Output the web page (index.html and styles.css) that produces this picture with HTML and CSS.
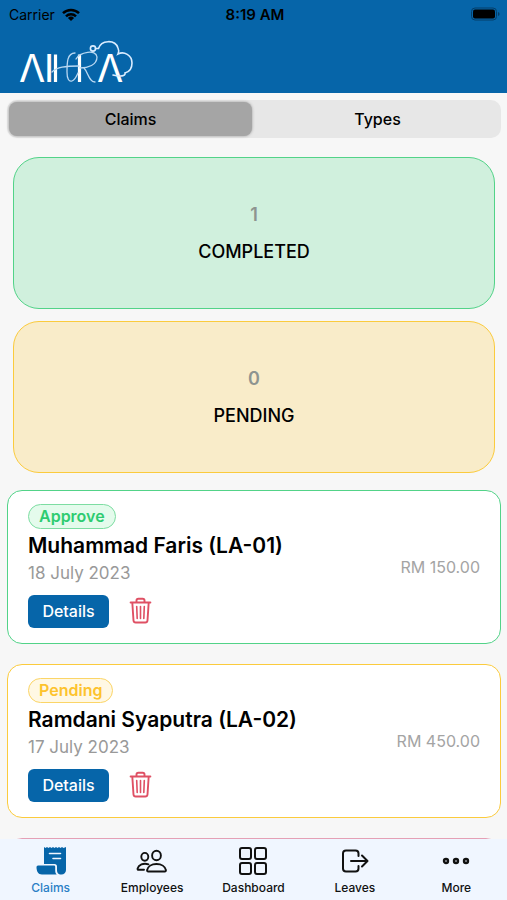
FILE: index.html
```html
<!DOCTYPE html>
<html lang="en">
<head>
<meta charset="utf-8">
<meta name="viewport" content="width=device-width, initial-scale=1">
<title>AIHRA Claims</title>
<link rel="stylesheet" href="styles.css">
</head>
<body>
<svg width="0" height="0" class="defs" aria-hidden="true">
  <symbol id="trash" viewBox="0 0 24 28">
    <g fill="none" stroke="currentColor" stroke-linecap="round" stroke-linejoin="round">
      <path stroke-width="1.9" d="M1.600 5.500h19.800M3.300 5.500l1.200 18a2.200 2.200 0 0 0 2.200 2h9.600a2.200 2.200 0 0 0 2.200-2L19.700 5.500M7.500 5V3.500a1.800 1.800 0 0 1 1.800-1.800h4.400a1.800 1.800 0 0 1 1.800 1.800V5"/>
      <path stroke-width="1.6" d="M7.700 9.500l.5 12M11.500 9.500v12M15.300 9.500l-.5 12"/>
    </g>
  </symbol>
</svg>

<header class="header">
  <div class="status">
    <span class="carrier">Carrier
      <svg width="18" height="13" viewBox="0 0 18 13" aria-hidden="true"><g fill="none" stroke="#000" stroke-width="2.5"><path d="M1 5.2a11.4 11.4 0 0 1 16 0"/><path d="M4 8.3a7.2 7.2 0 0 1 10 0"/></g><path d="M9 13L5.9 9.9a4.4 4.4 0 0 1 6.2 0z"/></svg>
    </span>
    <span class="time">8:19 AM</span>
    <span class="battery">
      <svg width="30" height="14" viewBox="0 0 30 14" aria-hidden="true"><rect x=".5" y="1" width="25" height="12" rx="3.5" fill="none" stroke="#043e69"/><rect x="2" y="2.500" width="22" height="9" rx="2"/><path d="M27 5v4q1.600-.6 1.600-2T27 5z" fill="#043e69"/></svg>
    </span>
  </div>
  <svg class="logo" width="120" height="54" viewBox="0 0 120 54" role="img" aria-label="AIHRA">
    <g class="logo-letters">
      <text x="1" y="43">Λ</text>
      <text x="26" y="43">I</text>
      <text x="79" y="43">Λ</text>
    </g>
    <path d="M37.500 15.500V43M61.500 15.500V43" fill="none" stroke="#fff" stroke-width="3.200"/>
    <g fill="none" stroke="#b9d8f2" stroke-width="1.300" stroke-linecap="round">
      <path d="M34 33C39 28 47 27 61 27"/>
      <path d="M57 14C49 14 49 24 49 33C49 40 51 43 54 42C57 41 58 38 60 34"/>
      <path d="M58 20C62 13 78 10 79 18C79 26 70 29 62 29M66 29C70 33 71 43 77 43"/>
    </g>
    <g fill="none" stroke="#d9ecff" stroke-width="1.600" stroke-linecap="round">
      <circle cx="75" cy="9.500" r="2.600"/>
      <path d="M77.500 9.500h3C83 1 97 0 100 9c1 2 1 4 0 6 6-3 14 1 14 9 0 6-3 9-7 10 1 3-5 4-12 2"/>
    </g>
  </svg>
</header>

<main class="content">
  <div class="tabs">
    <button class="tab tab-active" type="button">Claims</button>
    <button class="tab" type="button">Types</button>
  </div>

  <section class="stats">
    <div class="stat completed"><strong>1</strong><span>COMPLETED</span></div>
    <div class="stat pending"><strong>0</strong><span>PENDING</span></div>
  </section>

  <section class="claims">
    <article class="claim approve">
      <div>
        <span class="badge">Approve</span>
        <h2>Muhammad Faris (LA-01)</h2>
        <p class="date">18 July 2023</p>
        <div class="actions">
          <button class="details" type="button">Details</button>
          <button class="delete" type="button" aria-label="Delete"><svg width="24" height="28"><use href="#trash"/></svg></button>
        </div>
      </div>
      <p class="amount">RM 150.00</p>
    </article>
    <article class="claim waiting">
      <div>
        <span class="badge">Pending</span>
        <h2>Ramdani Syaputra (LA-02)</h2>
        <p class="date">17 July 2023</p>
        <div class="actions">
          <button class="details" type="button">Details</button>
          <button class="delete" type="button" aria-label="Delete"><svg width="24" height="28"><use href="#trash"/></svg></button>
        </div>
      </div>
      <p class="amount">RM 450.00</p>
    </article>
    <article class="claim rejected"></article>
  </section>
</main>

<nav class="nav">
  <a class="current" href="#claims">
    <svg width="32" height="30" viewBox="0 0 32 30" aria-hidden="true"><path fill="currentColor" d="M9 1l1.500 1L12 1l1.500 1L15 1l1.500 1L18 1l1.500 1L21 1l1.500 1L24 1l1.500 1L27 1l1.500 1L31 1v23a4.500 4.500 0 0 1-4.500 4.500c-3.500 0-4.500-2-4.500-4.500v-3.500a2.500 2.500 0 0 0-2.500-2.500H9z"/><path fill="currentColor" d="M3 19.500h16a1.200 1.200 0 0 1 1.200 1.200v3.800c0 2 .5 3 1.500 4H7C3 28.500 1.500 25 1.500 21a1.500 1.500 0 0 1 1.500-1.500z"/><path fill="none" stroke="#f0f6ff" stroke-width="1.600" stroke-linecap="round" d="M14.500 7.500h11M18 12.500h7.500"/></svg>
    <span>Claims</span>
  </a>
  <a href="#employees">
    <svg width="32" height="30" viewBox="0 0 32 30" aria-hidden="true"><g fill="none" stroke="currentColor" stroke-width="1.900" stroke-linecap="round" stroke-linejoin="round"><ellipse cx="20.500" cy="9.500" rx="4.400" ry="4.800"/><path d="M20.500 18c-5 0-8.700 2.500-9.400 6-.2 1 .3 1.500 1.200 1.500h16.400c.9 0 1.400-.5 1.200-1.500-.7-3.500-4.400-6-9.400-6z"/><ellipse cx="8.800" cy="10.800" rx="3.500" ry="3.900"/><path d="M12.500 18.300c-5.300-1.700-10 .7-10.900 4.300-.2.800.2 1.200 1 1.200H8"/></g></svg>
    <span>Employees</span>
  </a>
  <a href="#dashboard">
    <svg width="32" height="30" viewBox="0 0 32 30" aria-hidden="true"><g fill="none" stroke="currentColor" stroke-width="2"><rect x="3" y="2" width="11" height="11" rx="2"/><rect x="18" y="2" width="11" height="11" rx="2"/><rect x="3" y="17" width="11" height="11" rx="2"/><rect x="18" y="17" width="11" height="11" rx="2"/></g></svg>
    <span>Dashboard</span>
  </a>
  <a href="#leaves">
    <svg width="32" height="30" viewBox="0 0 32 30" aria-hidden="true"><path fill="none" stroke="currentColor" stroke-width="2" stroke-linecap="round" stroke-linejoin="round" d="M19.500 10V7.500a3 3 0 0 0-3-3H7a3 3 0 0 0-3 3v15a3 3 0 0 0 3 3h9.500a3 3 0 0 0 3-3V20M23 9.500l5.500 5.500-5.500 5.500M12 15h16"/></svg>
    <span>Leaves</span>
  </a>
  <a href="#more">
    <svg width="32" height="30" viewBox="0 0 32 30" aria-hidden="true"><g fill="none" stroke="currentColor" stroke-width="2.400"><circle cx="6" cy="15" r="2"/><circle cx="16" cy="15" r="2"/><circle cx="26" cy="15" r="2"/></g></svg>
    <span>More</span>
  </a>
</nav>
</body>
</html>
```
FILE: styles.css
```css
* { box-sizing: border-box; }
body {
  margin: 0;
  height: 100vh;
  display: flex;
  flex-direction: column;
  overflow: hidden;
  background: #f7f7f7;
  color: #000;
  font-family: Inter, "Liberation Sans", sans-serif;
}
h2, p { margin: 0; }
button { font: inherit; color: inherit; border: 0; padding: 0; background: none; }
svg { display: block; }
.defs { position: absolute; }

.header { flex: none; background: #0665a9; }
.status {
  display: grid;
  grid-template-columns: 1fr auto 1fr;
  align-items: center;
  height: 28px;
  padding: 0 6px 0 9px;
  font-size: 14px;
}
.carrier { display: flex; align-items: center; gap: 7px; }
.time { font-size: 15px; font-weight: 600; }
.battery { justify-self: end; }
.logo { margin: 11px 0 0 18px; overflow: visible; }
.logo-letters { font-size: 38px; fill: #fff; }

.content { flex: 1; min-height: 0; overflow: hidden; padding: 7px 6px 0 7px; }
.tabs {
  display: grid;
  grid-template-columns: 1fr 1fr;
  gap: 4px;
  padding: 2px;
  border-radius: 10px;
  background: #e7e7e7;
}
.tab { height: 34px; border-radius: 8px; font-size: 16px; font-weight: 500; }
.tab-active { background: #a5a5a5; box-shadow: 0 0 3px #999; }

.stats { display: grid; gap: 12px; padding: 19px 6px 17px; }
.stat {
  height: 152px;
  border: 1px solid;
  border-radius: 26px;
  display: flex;
  flex-direction: column;
  align-items: center;
  justify-content: center;
  gap: 13px;
  font-size: 18px;
  line-height: 24px;
  font-weight: 500;
}
.stat strong { color: #8e9490; font-weight: 600; }
.stat span { color: #000; }
.completed { background: #d0f0dd; border-color: #52d388; }
.pending { background: #f9ecc9; border-color: #fbcb3d; }

.claims { display: grid; gap: 20px; }
.claim {
  display: flex;
  align-items: center;
  justify-content: space-between;
  min-height: 154px;
  padding: 12px 20px 15px;
  border: 1px solid;
  border-radius: 15px;
  background: #fff;
}
.approve { border-color: #52d388; }
.waiting { border-color: #fbcb3d; }
.rejected { border-color: #e5a0b5; }
.badge {
  display: inline-block;
  padding: 0 10px;
  border: 1px solid;
  border-radius: 13px;
  font-size: 16px;
  line-height: 23px;
  font-weight: 600;
  vertical-align: top;
}
.approve .badge { color: #2ecc71; background: #e4fbec; border-color: #7ddda2; }
.waiting .badge { color: #fdc32d; background: #fff8e4; border-color: #fbd567; }
h2 { font-size: 21px; line-height: 34px; font-weight: 600; }
.date { font-size: 17px; line-height: 20px; color: #999; }
.actions { display: flex; align-items: center; gap: 20px; margin-top: 12px; }
.details {
  width: 81px;
  height: 33px;
  border-radius: 6px;
  background: #0665a9;
  color: #fff;
  font-size: 16px;
  font-weight: 500;
}
.delete { color: #df5064; }
.amount { font-size: 16px; line-height: 20px; padding-top: 2px; color: #a4a4a4; }

.nav {
  flex: none;
  display: grid;
  grid-template-columns: repeat(5, 1fr);
  height: 61px;
  padding-top: 7px;
  background: #f0f6ff;
}
.nav a {
  display: flex;
  flex-direction: column;
  align-items: center;
  gap: 4px;
  color: #111;
  text-decoration: none;
  font-size: 12px;
  line-height: 16px;
  font-weight: 500;
}
.nav .current { color: #0665a9; }
.nav .current span { color: #2a7fc6; }
```
